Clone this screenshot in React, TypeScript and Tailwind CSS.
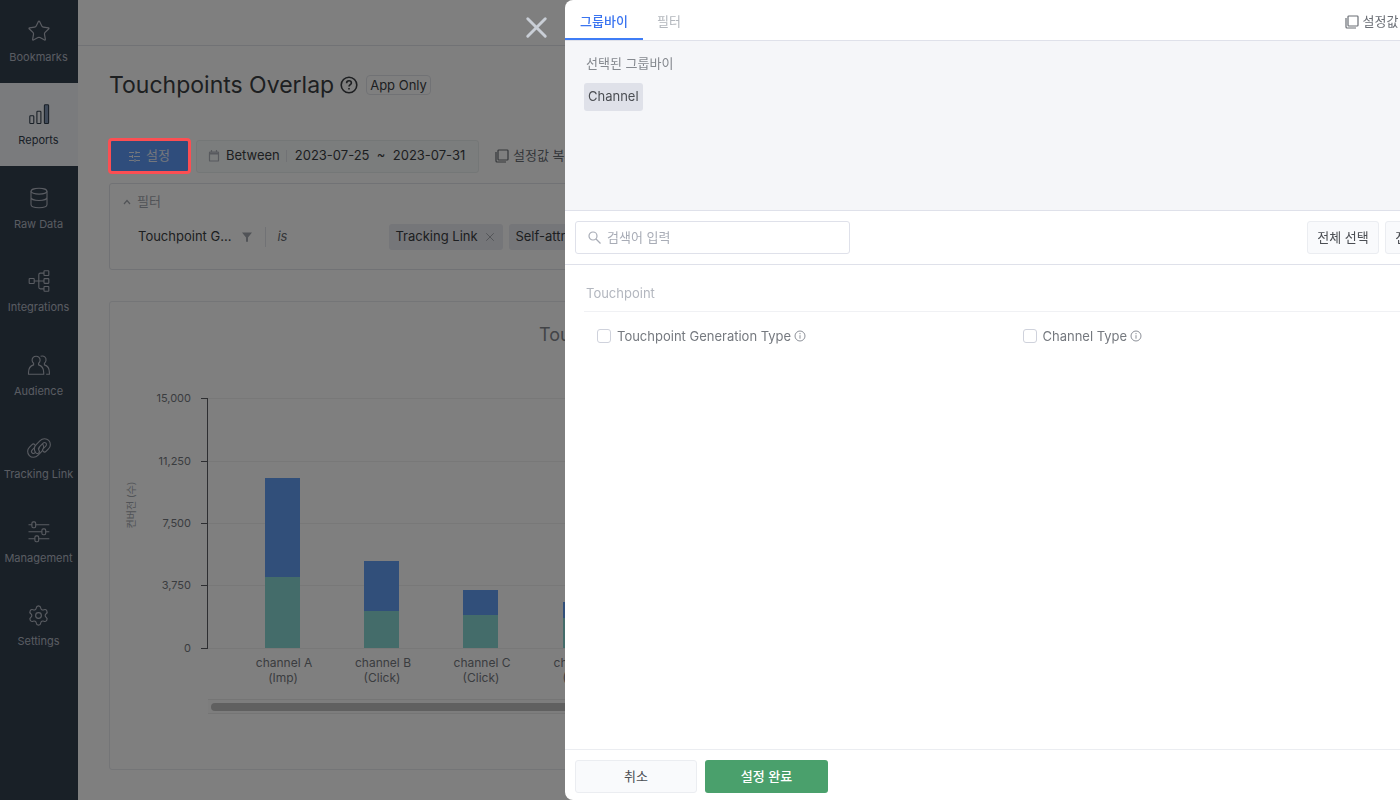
import type { ReactNode } from 'react';
import { Settings, Star, X } from 'lucide-react';

const linkLower = 'M13.6 8.4c1.400 1.900 1.200 4.300-.4 5.900l-3.700 3.700c-1.700 1.700-4.300 1.700-5.800.2s-1.500-4.100.2-5.800l2.500-2.500';
const linkUpper = 'M10.400 15.600c-1.400-1.900-1.200-4.300.4-5.900L14.500 6c1.700-1.700 4.300-1.700 5.800-.2s1.500 4.100-.2 5.800l-2.500 2.500';

const navItems: { label: string; icon: ReactNode; active?: boolean }[] = [
  { label: 'Bookmarks', icon: <Star size={24} strokeWidth={1.2} /> },
  {
    label: 'Reports',
    active: true,
    icon: (
      <NavIcon>
        <rect x="2.8" y="13.7" width="4" height="7.8" rx="0.8" />
        <rect x="9.9" y="9.3" width="4" height="12.2" rx="0.8" />
        <rect x="17.4" y="2.8" width="4.2" height="18.7" rx="0.8" fill="#8296b4" />
      </NavIcon>
    ),
  },
  {
    label: 'Raw Data',
    icon: (
      <NavIcon>
        <ellipse cx="12" cy="5.2" rx="8" ry="2.9" />
        <path d="M4 5.2v13.4c0 1.8 3.4 3.2 8 3.2s8-1.4 8-3.2V5.2M4 11.500c0 1.6 3.4 3 8 3s8-1.4 8-3" />
      </NavIcon>
    ),
  },
  {
    label: 'Integrations',
    icon: (
      <NavIcon>
        <rect x="2.2" y="9.5" width="5" height="5" rx="0.6" />
        <rect x="17" y="1.7" width="4.8" height="4.8" rx="0.6" />
        <rect x="17" y="9.6" width="4.8" height="4.8" rx="0.6" />
        <rect x="17" y="17.5" width="4.8" height="4.8" rx="0.6" />
        <path d="M7.2 12H17M17 4.1h-3.6c-1 0-1.6.6-1.6 1.6v12.6c0 1 .6 1.6 1.6 1.6H17" />
      </NavIcon>
    ),
  },
  {
    label: 'Audience',
    icon: (
      <NavIcon>
        <path d="M6.6 10.3a4 4 0 1 1 5 0v1.600c3.400 1 5.100 3.700 5.100 7.600v1.700H1.500v-1.700c0-3.900 1.700-6.600 5.100-7.600z" />
        <path d="M13.600 3.200c3.400-1 5.900 1.200 5.400 4.300-.2 1.200-.7 2.100-1.600 2.800v1.600c3.400 1 5 3.700 5 7.600v1.700h-3.200" />
      </NavIcon>
    ),
  },
  {
    label: 'Tracking Link',
    icon: (
      <NavIcon>
        {/* each ring is a wide stroke with a dark core */}
        <path d={linkLower} strokeWidth="5" strokeLinecap="round" />
        <path d={linkLower} strokeWidth="2.8" strokeLinecap="round" stroke="#33404f" />
        <path d={linkUpper} strokeWidth="5" strokeLinecap="round" />
        <path d={linkUpper} strokeWidth="2.8" strokeLinecap="round" stroke="#33404f" />
      </NavIcon>
    ),
  },
  {
    label: 'Management',
    icon: (
      <NavIcon>
        <path d="M1.5 4.8h3.4M8.7 4.8h13.6M1.5 11.8h13.4M18.7 11.8h3.6M1.5 18.8h6.4M11.7 18.8h10.6" />
        <rect x="4.9" y="1.9" width="3.8" height="5.8" rx="1.4" />
        <rect x="14.9" y="8.9" width="3.8" height="5.8" rx="1.4" />
        <rect x="7.9" y="15.9" width="3.8" height="5.8" rx="1.4" />
      </NavIcon>
    ),
  },
  { label: 'Settings', icon: <Settings size={23} strokeWidth={1.2} /> },
];

const ticks = [
  { label: '15,000', y: 97 },
  { label: '11,250', y: 160 },
  { label: '7,500', y: 222 },
  { label: '3,750', y: 284 },
  { label: '0', y: 347 },
];

const bars = [
  { name: 'channel A', type: '(Imp)', x: 155, top: 176, split: 275 },
  { name: 'channel B', type: '(Click)', x: 254, top: 259, split: 309 },
  { name: 'channel C', type: '(Click)', x: 353, top: 288, split: 313 },
  { name: 'channel D', type: '(Click)', x: 453, top: 300, split: 316 },
];

function NavIcon({ children }: { children: ReactNode }) {
  return (
    <svg width="24" height="24" viewBox="0 0 24 24" fill="none" stroke="currentColor" strokeWidth="1.1">
      {children}
    </svg>
  );
}

function CopyIcon() {
  return (
    <svg width="14" height="14" viewBox="0 0 14 14" fill="none" stroke="currentColor" strokeWidth="1.2">
      <rect x="3" y="1" width="10" height="10" rx="0.8" />
      <path d="M1 3v9c0 .6.4 1 1 1h9" />
    </svg>
  );
}

function Sidebar() {
  return (
    <aside className="w-[78px] shrink-0 bg-[#33404f]">
      <nav className="flex flex-col h-[668px] -mt-px">
        {navItems.map((item) => (
          <a
            key={item.label}
            href="#"
            className={`flex flex-1 flex-col items-center justify-center gap-1 pt-1 pr-px text-[11px] leading-5 whitespace-nowrap ${
              item.active ? 'bg-[#f5f7fa] text-[#33404f]' : 'text-[#b4b9c4]'
            }`}
          >
            <span className="flex h-6 items-center">{item.icon}</span>
            {item.label}
          </a>
        ))}
      </nav>
    </aside>
  );
}

function Chart() {
  return (
    <section className="mt-[31px] h-[469px] rounded-[3px] border border-[#e8eaee] overflow-hidden">
      <svg width="100%" height="467" fontSize="11" fill="#75797f">
        <text x="429" y="39" fontSize="18" fill="#85898f">Touchpoints Overlap</text>
        <text x="-203" y="25" fontSize="10" fill="#a3a7ae" textAnchor="middle" transform="rotate(-90)">
          컨버전 (수)
        </text>
        {ticks.map((tick) => (
          <g key={tick.label}>
            <path d={`M91 ${tick.y - 0.5}h7`} stroke="#5a5d62" />
            <line x1="98" x2="100%" y1={tick.y - 0.5} y2={tick.y - 0.5} stroke="#f0f0f0" />
            <text x="81" y={tick.y + 3} textAnchor="end">{tick.label}</text>
          </g>
        ))}
        <path d="M97.5 96v251" stroke="#5a5d62" />
        {bars.map((bar) => (
          <g key={bar.name} fontSize="12">
            <rect x={bar.x} y={bar.top} width="35" height={bar.split - bar.top} fill="#629ef4" />
            <rect x={bar.x} y={bar.split} width="35" height={346 - bar.split} fill="#88d8d4" />
            <text x={bar.x + 19} y="365" textAnchor="middle">{bar.name}</text>
            <text x={bar.x + 18} y="380" textAnchor="middle">{bar.type}</text>
          </g>
        ))}
        <rect x="98" y="397" width="100%" height="15" fill="#fafafa" />
        <path d="M98 397.5h2000M98 411.5h2000" stroke="#ebebeb" />
        <rect x="101" y="401" width="2000" height="8" rx="4" fill="#c0c0c0" />
      </svg>
    </section>
  );
}

function ReportPage() {
  return (
    <main className="min-w-0 flex-1 bg-white text-[#3b3e43]">
      <div className="h-[46px] border-b border-[#e3e5ea]"></div>
      <div className="pl-[31px] pr-8 whitespace-nowrap">
        <div className="flex items-center pt-[19px]">
          <h1 className="text-[23px] leading-10">Touchpoints Overlap</h1>
          <svg className="ml-1.5" width="18" height="18" viewBox="0 0 18 18" fill="none" stroke="currentColor" strokeWidth="1.6">
            <circle cx="9" cy="9" r="7.8" />
            <path d="M6.6 7.2c0-1.5 1-2.4 2.4-2.4s2.4.9 2.4 2.1c0 1.7-2.4 1.9-2.4 3.7M9 12v1.5" />
          </svg>
          <span className="ml-2 rounded-sm border border-[#e3e5ea] px-[3px] text-[13px] leading-[18px]">App Only</span>
        </div>

        {/* Toolbar */}
        <div className="mt-[34px] flex items-center text-[13px]">
          <div className="relative">
            <button className="flex h-[34px] w-[81px] items-center justify-center gap-1.5 bg-[#5e9af8] text-[#e8eefa]">
              <svg width="11" height="11" viewBox="0 0 11 11" fill="none" stroke="currentColor" strokeWidth="1.1">
                <path d="M0 1.5h5M7 1.5h4M7 0v3M0 5.5h3M5 5.5h6M3.5 4v3M0 9.5h5M7 9.5h4M6 8v3" />
              </svg>
              설정
            </button>
            <span className="absolute -inset-px z-20 rounded-sm border-3 border-[#fc4e52]"></span>
          </div>
          <div className="ml-1.5 flex h-[33px] w-[283px] items-center rounded-[3px] border border-[#e9eeee] bg-[#f7fbfa]">
            <svg className="ml-[11px]" width="12" height="12" viewBox="0 0 12 12" fill="none" stroke="#b0b4bd" strokeWidth="1.2">
              <rect x="1.5" y="2" width="9" height="9" rx="0.6" />
              <path d="M1.5 4h9M1.5 3h9M3.5 0v2M8.5 0v2" />
            </svg>
            <span className="ml-1.5">Between</span>
            <span className="mx-1.5 h-3 w-px bg-[#e3e5ea]"></span>
            <span className="ml-0.5">2023-07-25&nbsp; ~ &nbsp;2023-07-31</span>
          </div>
          <button className="ml-4 flex items-center gap-1 text-[#6a6e75]">
            <CopyIcon />
            설정값 복사
          </button>
        </div>

        {/* Filters */}
        <section className="mt-2.5 h-[87px] rounded-[3px] border border-[#e3e5ea] overflow-hidden text-[13px]">
          <h2 className="flex h-9 items-center gap-1.5 pl-[13px] text-[#a3a7ae]">
            <svg width="8" height="6" viewBox="0 0 8 6" fill="none" stroke="currentColor" strokeWidth="1.2">
              <path d="M1 5l3-3.500L7 5" />
            </svg>
            필터
          </h2>
          <div className="flex h-[34px] items-center pl-7">
            <span>Touchpoint G...</span>
            <svg className="ml-[11px]" width="10" height="10" viewBox="0 0 10 10" fill="#a3a7ae">
              <path d="M0 .5h10L6 5.500v4.200H4V5.500z" />
            </svg>
            <span className="mr-[11px] ml-[13px] h-5 w-px bg-[#e3e5ea]"></span>
            <span className="w-[112px] text-[#6a6e75] italic">is</span>
            <span className="flex h-[26px] w-[114px] items-center rounded-[3px] bg-[#ebecf2] px-1.5">
              Tracking Link
              <X className="ml-auto text-[#a3a7ae]" size={14} strokeWidth={1.6} />
            </span>
            <span className="ml-1.5 flex h-[26px] items-center rounded-[3px] bg-[#ebecf2] px-1.5">Self-attributing</span>
          </div>
        </section>

        <Chart />
      </div>
    </main>
  );
}

function GroupByOption({ label }: { label: string }) {
  return (
    <div className="flex items-center">
      <label className="flex items-center gap-1.5">
        <input type="checkbox" className="size-[14px] appearance-none rounded-[3px] border border-[#cfd2dc] bg-white" />
        {label}
      </label>
      <svg className="ml-[3px]" width="12" height="12" viewBox="0 0 12 12" fill="none" stroke="#8d9199">
        <circle cx="6" cy="6" r="5" />
        <path d="M6 5.2v3.5M6 3v1.2" />
      </svg>
    </div>
  );
}

function Drawer() {
  return (
    <div
      role="dialog"
      className="fixed inset-y-0 left-[565px] -right-[67px] z-30 flex flex-col rounded-l-lg bg-white text-[13px] whitespace-nowrap text-[#4b4e53] overflow-hidden"
    >
      <header className="flex h-[41px] shrink-0 items-stretch border-b border-[#dfe1ea]">
        <button className="w-[78px] border-b-2 border-[#3f7df6] pt-1.5 font-medium text-[#3a74f0]">그룹바이</button>
        <button className="px-3.5 pt-1 text-[#b3b7bd]">필터</button>
        <button className="mr-[41px] ml-auto flex items-center gap-1 pt-1 text-[#6a6e75]">
          <CopyIcon />
          설정값 복사
        </button>
      </header>

      <section className="h-[170px] shrink-0 border-b border-[#dfe1ea] bg-[#f5f6f9] pt-3 pl-[19px]">
        <h2 className="pl-0.5 leading-5 text-[#85898f]">선택된 그룹바이</h2>
        <span className="mt-2.5 inline-flex h-7 items-center rounded-[3px] bg-[#dfe1e9] px-1">Channel</span>
      </section>

      <div className="flex h-[54px] shrink-0 items-center border-b border-[#dfe1ea] px-2.5">
        <label className="flex h-[33px] w-[275px] items-center gap-1.5 rounded-[3px] border border-[#dfe1ea] px-3">
          <svg width="13" height="13" viewBox="0 0 13 13" fill="none" stroke="#a8acb6" strokeWidth="1.2">
            <circle cx="5" cy="5" r="4" />
            <path d="M8 8l4.5 4.5" />
          </svg>
          <input
            type="text"
            aria-label="검색어 입력"
            placeholder="검색어 입력"
            className="min-w-0 flex-1 outline-none placeholder:text-[#a8acb6]"
          />
        </label>
        <button className="mr-1.5 ml-auto h-[33px] w-[72px] rounded-[3px] border border-[#ebedf1] bg-[#f9fafc]">전체 선택</button>
        <button className="h-[33px] w-[72px] rounded-[3px] border border-[#ebedf1] bg-[#f9fafc]">전체 해제</button>
      </div>

      <section className="flex-1 px-[19px] pt-[18px]">
        <h3 className="border-b border-[#f0f1f4] pb-2 pl-0.5 leading-5 text-[#b3b7bf]">Touchpoint</h3>
        <div className="grid grid-cols-2 pt-3.5 pl-[13px] leading-5 text-[#75797f]">
          <GroupByOption label="Touchpoint Generation Type" />
          <GroupByOption label="Channel Type" />
        </div>
      </section>

      <footer className="flex h-[51px] shrink-0 items-start gap-2 border-t border-[#ebedf1] px-2.5 pt-2.5">
        <button className="h-[33px] w-[122px] rounded-[3px] border border-[#ebedf1] bg-[#f9fafc]">취소</button>
        <button className="h-[33px] w-[123px] rounded-[3px] bg-[#4aa06c] font-medium text-white">설정 완료</button>
      </footer>
    </div>
  );
}

export default function App() {
  return (
    <div className="flex min-h-screen overflow-hidden font-['Inter','Noto_Sans_CJK_KR',sans-serif]">
      <Sidebar />
      <ReportPage />
      <div className="fixed inset-0 z-10 bg-black/50"></div>
      <button aria-label="Close" className="fixed top-2.5 left-[519px] z-20 text-[#c9ced6]">
        <X size={35} strokeWidth={2} />
      </button>
      <Drawer />
    </div>
  );
}
